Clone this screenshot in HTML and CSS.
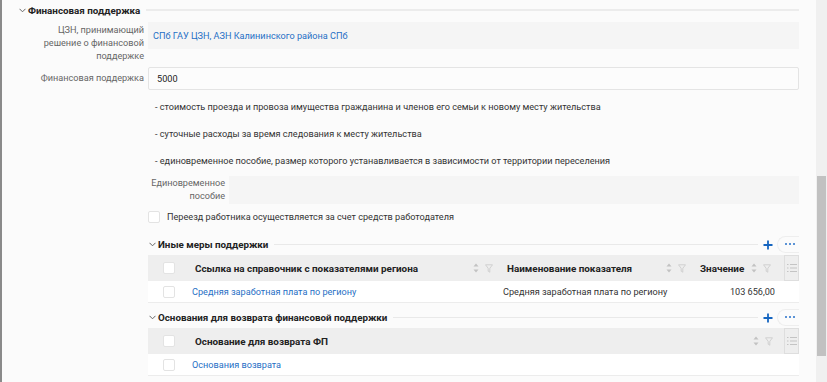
FILE: index.html
```html
<!DOCTYPE html>
<html lang="ru">
<head>
    <meta charset="UTF-8">
    <title>Финансовая поддержка</title>
    <link rel="stylesheet" href="styles.css">
</head>
<body>
<div class="page">
    <div class="content">
        <div class="section-head main-head">
            <svg class="chev" width="7" height="5" viewBox="0 0 7 5"><path d="M0.5 0.8 L3.5 3.8 L6.5 0.8" fill="none" stroke="#666" stroke-width="1"/></svg>
            <span class="section-title">Финансовая поддержка</span>
            <span class="head-line"></span>
        </div>

        <div class="field-row first">
            <div class="label">ЦЗН, принимающий решение о финансовой поддержке</div>
            <div class="value-box readonly"><a class="link">СПб ГАУ ЦЗН, АЗН Калининского района СПб</a></div>
        </div>

        <div class="field-row second">
            <div class="label">Финансовая поддержка</div>
            <div class="value-box input">5000</div>
        </div>

        <div class="inner">
            <p class="note">- стоимость проезда и провоза имущества гражданина и членов его семьи к новому месту жительства</p>
            <p class="note">- суточные расходы за время следования к месту жительства</p>
            <p class="note">- единовременное пособие, размер которого устанавливается в зависимости от территории переселения</p>

            <div class="sub-row">
                <div class="label">Единовременное пособие</div>
                <div class="value-box readonly"></div>
            </div>

            <label class="check-row">
                <span class="box"></span>
                <span>Переезд работника осуществляется за счет средств работодателя</span>
            </label>

            <div class="section-head sub-head">
                <svg class="chev" width="7" height="5" viewBox="0 0 7 5"><path d="M0.5 0.8 L3.5 3.8 L6.5 0.8" fill="none" stroke="#666" stroke-width="1"/></svg>
                <span class="section-title">Иные меры поддержки</span>
                <span class="head-line"></span>
                <svg class="plus" width="10" height="10" viewBox="0 0 10 10"><path d="M5 0.5 V9.5 M0.5 5 H9.5" stroke="#1565c0" stroke-width="1.8"/></svg>
                <span class="more"><svg width="10" height="2" viewBox="0 0 10 2"><rect x="0" y="0" width="2" height="2" fill="#5b93d6"/><rect x="4" y="0" width="2" height="2" fill="#5b93d6"/><rect x="8" y="0" width="2" height="2" fill="#5b93d6"/></svg></span>
            </div>

            <div class="grid">
                <div class="grid-head">
                    <div class="cell chk"><span class="box"></span></div>
                    <div class="cell th col-ref">Ссылка на справочник с показателями региона
                        <span class="icons">
                            <svg width="6" height="10" viewBox="0 0 6 10"><path d="M3 0.5 L5.5 3.5 H0.5 Z M3 9.5 L5.5 6.5 H0.5 Z" fill="#c2c2c2"/></svg>
                            <svg width="8" height="9" viewBox="0 0 8 9"><path d="M0.5 0.8 H7.5 L4.8 4.3 V8.2 L3.2 7.2 V4.3 Z" fill="none" stroke="#cdcdcd" stroke-width="0.9"/></svg>
                        </span>
                    </div>
                    <div class="cell th col-name">Наименование показателя
                        <span class="icons">
                            <svg width="6" height="10" viewBox="0 0 6 10"><path d="M3 0.5 L5.5 3.5 H0.5 Z M3 9.5 L5.5 6.5 H0.5 Z" fill="#c2c2c2"/></svg>
                            <svg width="8" height="9" viewBox="0 0 8 9"><path d="M0.5 0.8 H7.5 L4.8 4.3 V8.2 L3.2 7.2 V4.3 Z" fill="none" stroke="#cdcdcd" stroke-width="0.9"/></svg>
                        </span>
                    </div>
                    <div class="cell th col-val">Значение
                        <span class="icons">
                            <svg width="6" height="10" viewBox="0 0 6 10"><path d="M3 0.5 L5.5 3.5 H0.5 Z M3 9.5 L5.5 6.5 H0.5 Z" fill="#c2c2c2"/></svg>
                            <svg width="8" height="9" viewBox="0 0 8 9"><path d="M0.5 0.8 H7.5 L4.8 4.3 V8.2 L3.2 7.2 V4.3 Z" fill="none" stroke="#cdcdcd" stroke-width="0.9"/></svg>
                        </span>
                    </div>
                    <div class="cell cols">
                        <svg width="10" height="8" viewBox="0 0 10 8"><path d="M0 0.5 H1.5 M3 0.5 H10 M0 4 H1.5 M3 4 H10 M0 7.5 H1.5 M3 7.5 H10" stroke="#c4c4c4" stroke-width="1"/></svg>
                    </div>
                </div>
                <div class="grid-row">
                    <div class="cell chk"><span class="box"></span></div>
                    <div class="cell col-ref"><a class="link">Средняя заработная плата по региону</a></div>
                    <div class="cell col-name">Средняя заработная плата по региону</div>
                    <div class="cell col-val num">103 656,00</div>
                    <div class="cell cols-empty"></div>
                </div>
            </div>

            <div class="section-head sub-head">
                <svg class="chev" width="7" height="5" viewBox="0 0 7 5"><path d="M0.5 0.8 L3.5 3.8 L6.5 0.8" fill="none" stroke="#666" stroke-width="1"/></svg>
                <span class="section-title">Основания для возврата финансовой поддержки</span>
                <span class="head-line"></span>
                <svg class="plus" width="10" height="10" viewBox="0 0 10 10"><path d="M5 0.5 V9.5 M0.5 5 H9.5" stroke="#1565c0" stroke-width="1.8"/></svg>
                <span class="more"><svg width="10" height="2" viewBox="0 0 10 2"><rect x="0" y="0" width="2" height="2" fill="#5b93d6"/><rect x="4" y="0" width="2" height="2" fill="#5b93d6"/><rect x="8" y="0" width="2" height="2" fill="#5b93d6"/></svg></span>
            </div>

            <div class="grid">
                <div class="grid-head">
                    <div class="cell chk"><span class="box"></span></div>
                    <div class="cell th col-wide">Основание для возврата ФП
                        <span class="icons">
                            <svg width="6" height="10" viewBox="0 0 6 10"><path d="M3 0.5 L5.5 3.5 H0.5 Z M3 9.5 L5.5 6.5 H0.5 Z" fill="#c2c2c2"/></svg>
                            <svg width="8" height="9" viewBox="0 0 8 9"><path d="M0.5 0.8 H7.5 L4.8 4.3 V8.2 L3.2 7.2 V4.3 Z" fill="none" stroke="#cdcdcd" stroke-width="0.9"/></svg>
                        </span>
                    </div>
                    <div class="cell cols">
                        <svg width="10" height="8" viewBox="0 0 10 8"><path d="M0 0.5 H1.5 M3 0.5 H10 M0 4 H1.5 M3 4 H10 M0 7.5 H1.5 M3 7.5 H10" stroke="#c4c4c4" stroke-width="1"/></svg>
                    </div>
                </div>
                <div class="grid-row">
                    <div class="cell chk"><span class="box"></span></div>
                    <div class="cell col-wide"><a class="link">Основания возврата</a></div>
                    <div class="cell cols-empty"></div>
                </div>
            </div>
        </div>
    </div>
    <div class="scrollbar"><div class="thumb"></div></div>
</div>
</body>
</html>
```

FILE: styles.css
```css
body {
    margin: 0;
    font-family: Roboto, "Liberation Sans", Arial, sans-serif;
    font-size: 9.15px;
    color: #333;
    background: #fbfbfb;
    overflow: hidden;
}
.page {
    display: flex;
    height: 382px;
    border-left: 2px solid #8a8a8a;
}
.content {
    flex: 1;
    padding: 0 17px 0 0;
    overflow: hidden;
    white-space: nowrap;
}
.scrollbar {
    width: 11px;
    flex: none;
    background: #f0f0f0;
    padding-top: 176px;
}
.thumb {
    width: 9px;
    height: 180px;
    margin-left: 1px;
    background: #c1c1c1;
}
.link {
    color: #1f6fc5;
    cursor: pointer;
}

/* заголовки разделов */
.section-head {
    display: flex;
    align-items: center;
    height: 20px;
}
.main-head {
    padding-left: 17px;
}
.chev {
    margin-right: 2px;
    margin-top: 1px;
    flex: none;
}
.section-title {
    font-weight: bold;
    font-size: 9.8px;
    color: #222;
}
.head-line {
    flex: 1;
    height: 1px;
    background: #e9e9e9;
    margin-left: 6px;
}
.main-head .head-line {
    height: 2px;
    background: #ececec;
}
.plus {
    margin: 2px 0 0 5px;
    flex: none;
}
.more {
    display: flex;
    align-items: center;
    border: 1px solid #eee;
    border-right: none;
    border-radius: 9px 0 0 9px;
    height: 17px;
    padding: 0 4px 0 7px;
    margin-left: 4px;
    box-sizing: border-box;
}

/* поля */
.field-row {
    display: grid;
    grid-template-columns: 107px 1fr;
    column-gap: 4px;
    padding-left: 35px;
}
.field-row.first {
    margin-top: 2px;
    height: 45px;
}
.field-row.second {
    align-items: center;
}
.label {
    text-align: right;
    color: #666;
    line-height: 13px;
    padding-top: 1px;
    white-space: normal;
}
.first .label {
    padding-top: 2px;
}
.value-box {
    display: flex;
    align-items: center;
    box-sizing: border-box;
}
.readonly {
    background: #f5f5f5;
    height: 27px;
    padding-left: 5px;
}
.input {
    background: #fcfcfc;
    border: 1px solid #e4e4e4;
    border-radius: 2px;
    height: 23px;
    padding-left: 8px;
    color: #222;
}
.second .label {
    padding-top: 0;
}

.inner {
    margin-left: 146px;
}
.note {
    margin: 0;
    padding-left: 7px;
    height: 27px;
    line-height: 27px;
}
.inner .note:first-child {
    margin-top: 4px;
}
.sub-row {
    display: grid;
    grid-template-columns: 77px 1fr;
    column-gap: 4px;
    margin-top: 1px;
}
.sub-row .readonly {
    height: 28px;
}
.check-row {
    display: flex;
    align-items: center;
    gap: 7px;
    height: 26px;
}
.box {
    display: inline-block;
    width: 10px;
    height: 10px;
    border: 1px solid #e3e3e3;
    border-radius: 2px;
    background: #fff;
}
.sub-head {
    margin-top: 4px;
    padding-left: 1px;
}

/* таблицы */
.grid {
    margin-top: 1px;
}
.grid-head, .grid-row {
    display: flex;
}
.grid-head {
    background: #eeeeee;
    height: 26px;
}
.grid-row {
    background: #fff;
    height: 21px;
    border-bottom: 1px solid #ececec;
}
.cell {
    display: flex;
    align-items: center;
    box-sizing: border-box;
    flex: none;
}
.th {
    font-weight: bold;
    font-size: 9.9px;
    color: #222;
}
.chk {
    width: 44px;
    padding-left: 15px;
}
.col-ref {
    width: 311px;
    padding-left: 3px;
}
.grid-row .col-ref {
    padding-left: 0;
}
.col-name {
    width: 193px;
    padding-left: 4px;
}
.grid-row .col-name {
    padding-left: 0;
}
.col-val {
    width: 87px;
    padding-left: 4px;
}
.num {
    justify-content: flex-end;
    padding-right: 8px;
}
.col-wide {
    width: 591px;
    padding-left: 3px;
}
.grid-row .col-wide {
    padding-left: 0;
}
.icons {
    margin-left: auto;
    display: flex;
    align-items: center;
    gap: 6px;
    padding-right: 10px;
}
.col-val .icons {
    margin-left: 7px;
}
.cols {
    width: 15px;
    border: 1px solid #dedede;
    justify-content: center;
    margin-left: auto;
}
.cols-empty {
    width: 15px;
    margin-left: auto;
}
```
